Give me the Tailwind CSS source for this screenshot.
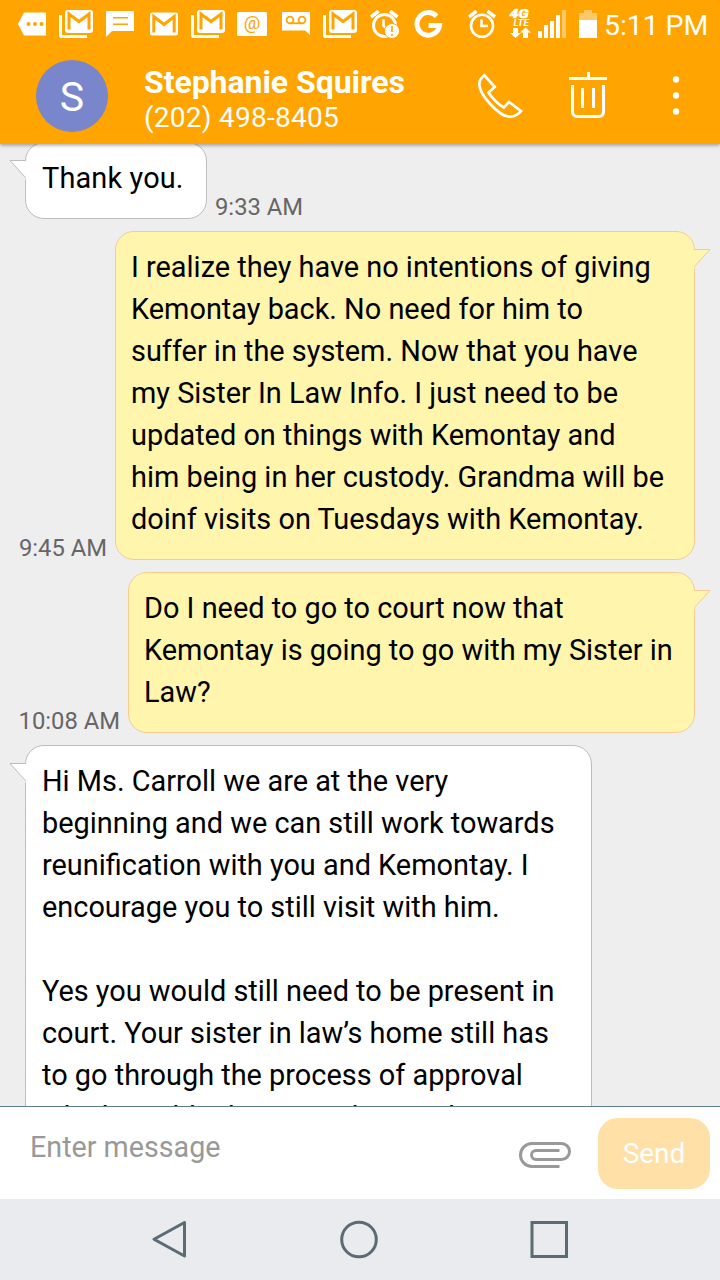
<!DOCTYPE html>
<html lang="en">
<head>
  <meta charset="UTF-8" />
  <meta name="viewport" content="width=device-width, initial-scale=1.0"/>
  <title>Messages</title>
  <script src="https://cdn.jsdelivr.net/npm/@tailwindcss/browser@4"></script>
</head>
<body class="w-[720px] h-[1280px] overflow-hidden flex flex-col bg-[#eeeeee] font-[Roboto,sans-serif]">

  <!-- Header -->
  <header class="relative z-10 h-36 shrink-0 bg-[#ffa400] text-white shadow-[0_1px_4px_rgba(0,0,0,0.4)]">
    <!-- Status bar -->
    <div class="h-12 flex">
      <svg class="w-[600px] h-12 shrink-0" viewBox="0 0 600 48" fill="#fff">
        <!-- more -->
        <path d="M24 12.500H46V35.500H24L18 24Z"/>
        <g fill="#ffa400"><circle cx="28.500" cy="24" r="2"/><circle cx="35" cy="24" r="2"/><circle cx="41.500" cy="24" r="2"/></g>
        <!-- mail stack -->
        <g id="mails">
          <path d="M59 15h3v20h25v3H61.500a2.500 2.500 0 0 1-2.500-2.500z"/>
          <rect x="65" y="10" width="28" height="23" rx="3"/>
          <path d="M69 29.500V14L79 21.500 89 14V29.500" fill="none" stroke="#ffa400" stroke-width="3"/>
        </g>
        <use href="#mails" x="132"/>
        <use href="#mails" x="264"/>
        <!-- chat -->
        <path d="M106 11h28v20H112l-6 6z"/>
        <path d="M113 17.800h15M113 24.300h15" stroke="#ffa400" stroke-width="1.500"/>
        <!-- mail -->
        <rect x="150" y="12.500" width="28" height="23" rx="2.500"/>
        <path d="M153.800 32.500V16.500L164 24.500 174.200 16.500V32.500" fill="none" stroke="#ffa400" stroke-width="3"/>
        <!-- email -->
        <rect x="237" y="12" width="30" height="24" rx="1.500"/>
        <text x="252" y="29" text-anchor="middle" font-size="18.500" fill="#ffa400">@</text>
        <!-- voicemail -->
        <path d="M282 12h28v23l-5-4.500H282z"/>
        <path d="M290 23.300H302" stroke="#ffa400" stroke-width="1.800"/>
        <g fill="none" stroke="#ffa400" stroke-width="1.800"><circle cx="290" cy="20" r="3.400"/><circle cx="302" cy="20" r="3.400"/></g>
        <!-- missed alarm -->
        <g fill="none" stroke="#fff" stroke-width="3">
          <circle cx="384.500" cy="25.500" r="11"/>
          <path d="M371 17L378.500 11.200M397.500 17L390 11.200" stroke-width="3.500"/>
          <path d="M383.500 19.500V26l3 2.500" stroke-width="2.500"/>
        </g>
        <circle cx="392" cy="31" r="7.500" stroke="#ffa400"/>
        <path d="M392 26V32M392 33.800V36" stroke="#ffa400" stroke-width="1.600"/>
        <!-- google -->
        <path d="M436.600 16.200A11.300 11.300 0 1 0 439.500 25.600H428.500" fill="none" stroke="#fff" stroke-width="5"/>
        <!-- alarm -->
        <g fill="none" stroke="#fff" stroke-width="2.600">
          <circle cx="482" cy="25.800" r="11"/>
          <path d="M469 17L476.500 11.200M495 17L487.500 11.200" stroke-width="3.500"/>
          <path d="M481.500 19.500V26h6.500"/>
        </g>
        <!-- network -->
        <text x="509.500" y="17.500" font-size="12.500" font-weight="900" font-style="italic" textLength="19" lengthAdjust="spacingAndGlyphs" stroke="#fff" stroke-width=".5">4G</text>
        <text x="513.500" y="26" font-size="9.500" font-weight="700" font-style="italic" textLength="15.500" lengthAdjust="spacingAndGlyphs">LTE</text>
        <path d="M513 28h5v5h3l-5.500 5-5.500-5h3zM523 38h5v-5.500h3L525.500 27.500 520 32.500h3z"/>
        <path d="M538 31h4v7h-4zM544 25h4v13h-4zM550 21h4v17h-4zM556 15h4v23h-4z"/>
        <path d="M562 10h4v28h-4z" opacity=".4"/>
        <!-- battery -->
        <path d="M579 13h5v-3h8v3h5v7h-18z" opacity=".4"/>
        <path d="M579 20h18v18h-18z"/>
      </svg>
      <span class="pl-1 pt-1 text-[28.5px] leading-[44px] -tracking-[0.1px] whitespace-nowrap">5:11 PM</span>
    </div>
    <!-- Contact -->
    <div class="h-24 flex items-center">
      <div class="ml-9 size-[72px] rounded-full bg-[#7986cb] flex items-center justify-center text-[41px] leading-none pt-0.5">S</div>
      <div class="ml-9 w-[326px] whitespace-nowrap pt-[7px]">
        <div class="text-[32px] leading-9 font-bold -tracking-[0.05px]">Stephanie Squires</div>
        <div class="text-[28px] leading-9 tracking-[0.25px]">(202) 498-8405</div>
      </div>
      <svg class="w-[214px] h-24" viewBox="470 48 214 96" fill="none" stroke="#fff" stroke-width="2.700">
        <path d="M484.500 75.300L494.700 87 488.500 92.500C491.500 97.500 499 105 503.800 107.500L509 102 521 111C518 115 513 117 508.500 116.500C499 116 479.500 95 479.300 84.500C479.300 80.500 481 77.500 484.500 75.300Z"/>
        <path d="M569 78.500H607M588.500 72V78M572.500 85V111.500Q572.500 116.500 577.500 116.500H598.500Q603.500 116.500 603.500 111.500V85M582.500 88V108M593.500 88V108" stroke-width="3"/>
        <g fill="#fff" stroke="none"><circle cx="676" cy="79.500" r="3.200"/><circle cx="676" cy="95.500" r="3.200"/><circle cx="676" cy="111.500" r="3.200"/></g>
      </svg>
    </div>
  </header>

  <!-- Conversation -->
  <main class="h-[962px] shrink-0 overflow-hidden">
    <div class="-mt-0.5 pl-[19px] pr-[25px] flex flex-col gap-3 text-[28.9px] leading-[42px] text-black whitespace-nowrap">
      <div class="ml-1.5 flex items-end">
        <div class="relative w-[182px] h-[77px] shrink-0 rounded-[19px] border border-[#bdbdbd] bg-white pt-[14px] pl-4 tracking-[0.15px]">
          Thank you.
          <svg class="absolute -left-[17px] top-[17px] w-[18px] h-5" viewBox="0 0 18 20"><path d="M18 .5H1L16.500 17.500V20H18Z" fill="#fff"/><path d="M17 .5H1L16.500 17.500" fill="none" stroke="#bdbdbd"/></svg>
        </div>
        <span class="ml-2 text-[23.8px] leading-6 text-[#666]">9:33 AM</span>
      </div>

      <div class="flex items-end justify-end">
        <span class="mr-2 text-[23.8px] leading-6 text-[#666]">9:45 AM</span>
        <div class="relative w-[580px] h-[329px] shrink-0 rounded-[19px] border border-[#f8cb90] bg-[#fff5ad] pt-[14px] pl-[15px]">
          I realize they have no intentions of giving<br>Kemontay back. No need for him to<br>suffer in the system. Now that you have<br>my Sister In Law Info. I just need to be<br>updated on things with Kemontay and<br>him being in her custody. Grandma will be<br>doinf visits on Tuesdays with Kemontay.
          <svg class="absolute -right-[17px] top-[17px] w-[18px] h-5" viewBox="0 0 18 20"><path d="M0 .5H17L1.500 17.500V20H0Z" fill="#fff5ad"/><path d="M1 .5H17L1.500 17.500" fill="none" stroke="#f8cb90"/></svg>
        </div>
      </div>

      <div class="flex items-end justify-end">
        <span class="mr-2 text-[23.8px] leading-6 text-[#666]">10:08 AM</span>
        <div class="relative w-[567px] h-[161px] shrink-0 rounded-[19px] border border-[#f8cb90] bg-[#fff5ad] pt-[14px] pl-[15px]">
          Do I need to go to court now that<br>Kemontay is going to go with my Sister in<br>Law?
          <svg class="absolute -right-[17px] top-[17px] w-[18px] h-5" viewBox="0 0 18 20"><path d="M0 .5H17L1.500 17.500V20H0Z" fill="#fff5ad"/><path d="M1 .5H17L1.500 17.500" fill="none" stroke="#f8cb90"/></svg>
        </div>
      </div>

      <div class="ml-1.5 flex items-end">
        <div class="relative w-[567px] h-[413px] shrink-0 rounded-[19px] border border-[#bdbdbd] bg-white pt-[14px] pl-4">
          Hi Ms. Carroll we are at the very<br>beginning and we can still work towards<br>reunification with you and Kemontay. I<br>encourage you to still visit with him.<br><br>Yes you would still need to be present in<br>court. Your sister in law’s home still has<br>to go through the process of approval<br>which could take a couple months
          <svg class="absolute -left-[17px] top-[17px] w-[18px] h-5" viewBox="0 0 18 20"><path d="M18 .5H1L16.500 17.500V20H18Z" fill="#fff"/><path d="M17 .5H1L16.500 17.500" fill="none" stroke="#bdbdbd"/></svg>
        </div>
      </div>
    </div>
  </main>

  <!-- Composer -->
  <div class="h-[93px] shrink-0 border-t border-[#607d8b] bg-white flex">
    <span class="w-[518px] pl-[30px] pt-[22px] text-[28.7px] leading-9 text-[#999]">Enter message</span>
    <svg class="w-[54px] h-[30px] mt-[33px]" viewBox="517.500 1140 54 30" fill="none" stroke="#999" stroke-width="3">
      <path d="M559 1166.500H531.500A11.500 11.500 0 0 1 531.500 1143.500H561A8 8 0 0 1 561 1159.500H535.500A4.500 4.500 0 0 1 535.500 1150.500H559"/>
    </svg>
    <button class="ml-[26px] mt-[11px] w-28 h-[71px] rounded-[20px] bg-[#ffe0a6] text-white text-[28px]">Send</button>
  </div>

  <!-- Navigation -->
  <nav class="h-[81px] shrink-0 bg-[#e9ebee]">
    <svg class="w-[720px] h-[81px]" viewBox="0 1199 720 81" fill="none" stroke="#5b6b73" stroke-width="3">
      <path d="M184.500 1222.500V1256L154 1239.300Z" stroke-linejoin="round"/>
      <circle cx="359" cy="1239.500" r="17.300"/>
      <path d="M532 1222.500H566.500V1256.500H532Z"/>
    </svg>
  </nav>
</body>
</html>
